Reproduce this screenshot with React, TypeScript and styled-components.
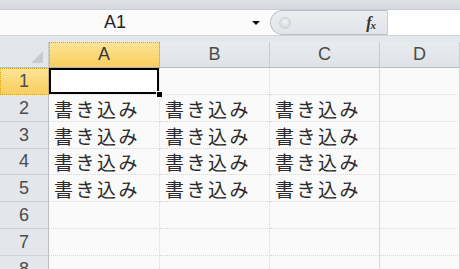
import React from "react";
import styled, { createGlobalStyle } from "styled-components";

const Global = createGlobalStyle`
  html, body { margin: 0; padding: 0; background: #e6e9ed; overflow: hidden; }
  * { box-sizing: border-box; }
`;

const Page = styled.div`
  width: 460px;
  height: 269px;
  display: flex;
  flex-direction: column;
  background: #e6e9ed;
  font-family: "Liberation Sans", "Noto Sans CJK JP", sans-serif;
  overflow: hidden;
  & > * { flex-shrink: 0; }
`;

const TopStrip = styled.div`
  height: 10px;
  background: linear-gradient(#dde1e6, #d6dae0);
  border-bottom: 1px solid #c9ced5;
`;

const FormulaRow = styled.div`
  height: 25px;
  display: flex;
  background: #fff;
`;

const NameBox = styled.div`
  width: 270px;
  position: relative;
  display: flex;
  align-items: center;
  justify-content: center;
  font-size: 18px;
  color: #222;
  padding-right: 40px;
  background: #fbfbfc;
`;

const Arrow = styled.span`
  position: absolute;
  right: 10px;
  top: 11px;
  width: 0;
  height: 0;
  border-left: 4px solid transparent;
  border-right: 4px solid transparent;
  border-top: 4px solid #111;
`;

const FxBox = styled.div`
  width: 118px;
  border: 1px solid #b9bfc7;
  border-right-color: #c7ccd2;
  border-radius: 13px 0 0 13px;
  background: linear-gradient(#eceef1, #e1e4e8);
  display: flex;
  align-items: center;
  justify-content: space-between;
  padding: 0 12px 0 8px;
`;

const Knob = styled.span`
  width: 12px;
  height: 12px;
  border-radius: 50%;
  background: radial-gradient(circle at 50% 40%, #f4f5f7, #c6cbd1);
  border: 1px solid #d0d4d9;
`;

const Fx = styled.span`
  font-family: "Liberation Serif", serif;
  font-style: italic;
  font-weight: bold;
  font-size: 16px;
  color: #333;
  letter-spacing: -1px;
  sub {
    font-size: 11px;
    vertical-align: -1px;
  }
`;

const FormulaInput = styled.div`
  flex: 1;
  background: #fff;
`;

const Gap = styled.div`
  height: 7px;
  background: #e4e7eb;
  border-top: 1px solid #cfd3d9;
`;

const Grid = styled.div`
  display: grid;
  grid-template-columns: 49px 111px 110px 110px 80px;
  grid-template-rows: 26px 27px 27px 27px 26px 27px 27px 27px 27px;
  background: #fafafa;
`;

const Corner = styled.div`
  background: #e3e6ea;
  border-right: 1px solid #c8ccd2;
  border-bottom: 1px solid #b9bec5;
  position: relative;
  &::after {
    content: "";
    position: absolute;
    right: 5px;
    bottom: 4px;
    width: 0;
    height: 0;
    border-left: 12px solid transparent;
    border-bottom: 12px solid #c7cbd1;
  }
`;

const ColHead = styled.div<{ $active?: boolean }>`
  display: flex;
  align-items: center;
  justify-content: center;
  font-size: 18px;
  color: ${(p) => (p.$active ? "#3a3a3a" : "#4c4c4c")};
  background: ${(p) =>
    p.$active ? "linear-gradient(#fde49a, #f9cf5c)" : "linear-gradient(#e8ebee, #dfe3e8)"};
  border-right: 1px solid #c8ccd2;
  border-bottom: 1px solid #b9bec5;
  ${(p) => (p.$active ? "outline: 1px dotted #e0a400; outline-offset: -1px;" : "")}
`;

const RowHead = styled.div<{ $active?: boolean }>`
  display: flex;
  align-items: center;
  justify-content: center;
  font-size: 18px;
  color: #4c4c4c;
  background: ${(p) =>
    p.$active ? "linear-gradient(#fde49a, #f9cf5c)" : "#e3e6ea"};
  border-right: 1px solid #b9bec5;
  border-bottom: 1px solid #cfd3d8;
  ${(p) => (p.$active ? "outline: 1px dotted #e0a400; outline-offset: -1px;" : "")}
`;

const Cell = styled.div<{ $selected?: boolean; $last?: boolean }>`
  position: relative;
  display: flex;
  align-items: center;
  padding-left: 5px;
  font-family: "Noto Sans CJK JP", sans-serif;
  font-size: 19px;
  letter-spacing: 2.5px;
  color: #2b2b2b;
  white-space: nowrap;
  background: #fafafa;
  border-right: 1px ${(p) => (p.$last ? "solid" : "dotted")} #d6d9dc;
  border-bottom: 1px dotted #d6d9dc;
  ${(p) => (p.$selected ? "box-shadow: inset 0 0 0 2px #000; background: #fff;" : "")}
`;

const Handle = styled.span`
  position: absolute;
  right: -4px;
  bottom: -4px;
  width: 7px;
  height: 7px;
  background: #000;
  border: 1px solid #fff;
  z-index: 2;
`;

const cols = ["A", "B", "C", "D"];
const rows = [1, 2, 3, 4, 5, 6, 7, 8];

export default function App() {
  return (
    <Page>
      <Global />
      <TopStrip />
      <FormulaRow>
        <NameBox>
          A1
          <Arrow />
        </NameBox>
        <FxBox>
          <Knob />
          <Fx>
            f<sub>x</sub>
          </Fx>
        </FxBox>
        <FormulaInput />
      </FormulaRow>
      <Gap />
      <Grid>
        <Corner />
        {cols.map((c, i) => (
          <ColHead key={c} $active={i === 0}>
            {c}
          </ColHead>
        ))}
        {rows.map((r) => (
          <React.Fragment key={r}>
            <RowHead $active={r === 1}>{r}</RowHead>
            {cols.map((c, ci) => {
              const filled = r >= 2 && r <= 5 && ci < 3;
              const selected = r === 1 && ci === 0;
              return (
                <Cell key={c} $selected={selected} $last={ci >= 2}>
                  {filled ? "書き込み" : null}
                  {selected ? <Handle /> : null}
                </Cell>
              );
            })}
          </React.Fragment>
        ))}
      </Grid>
    </Page>
  );
}
